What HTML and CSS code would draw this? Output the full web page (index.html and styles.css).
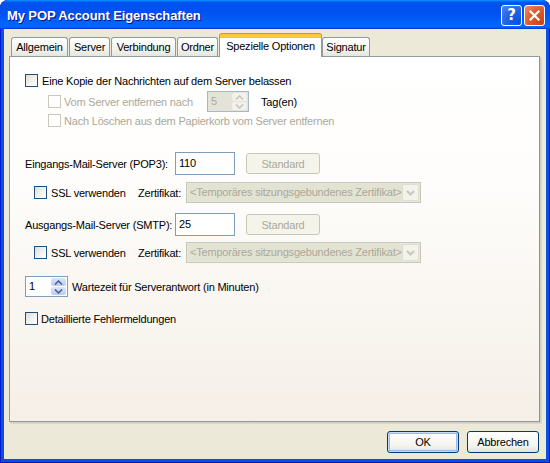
FILE: index.html
```html
<!DOCTYPE html>
<html>
<head>
<meta charset="utf-8">
<link rel="stylesheet" href="styles.css">
</head>
<body>
<div class="window">
  <div class="titlebar">
    <span class="title">My POP Account Eigenschaften</span>
    <div class="tb-buttons">
      <span class="tb-btn help">?</span>
      <span class="tb-btn close"><svg width="21" height="21" viewBox="0 0 21 21"><path d="M6.5 6.5 L14.5 14.5 M14.5 6.5 L6.5 14.5" stroke="#fff" stroke-width="2.2" stroke-linecap="square"/></svg></span>
    </div>
  </div>
  <div class="client">
    <div class="tabs">
      <div class="tab t-allg">Allgemein</div>
      <div class="tab t-serv">Server</div>
      <div class="tab t-verb">Verbindung</div>
      <div class="tab t-ord">Ordner</div>
      <div class="tab t-spez selected">Spezielle Optionen</div>
      <div class="tab t-sig">Signatur</div>
    </div>
    <div class="panel">
      <div class="row r1">
        <span class="cb"></span><span class="lbl">Eine Kopie der Nachrichten auf dem Server belassen</span>
      </div>
      <div class="row r2 indent">
        <span class="cb disabled"></span><span class="lbl dis w-vom">Vom Server entfernen nach</span>
        <div class="spin disabled s-days">
          <span class="spin-val">5</span>
          <span class="spin-btns">
            <span class="sb"><svg width="9" height="5" viewBox="0 0 9 5"><path d="M1 4.5 L4.5 1 L8 4.5" fill="none" stroke="#C9C7BA" stroke-width="1.6"/></svg></span>
            <span class="sb"><svg width="9" height="5" viewBox="0 0 9 5"><path d="M1 0.5 L4.5 4 L8 0.5" fill="none" stroke="#C9C7BA" stroke-width="1.6"/></svg></span>
          </span>
        </div>
        <span class="lbl tagen">Tag(en)</span>
      </div>
      <div class="row r3 indent">
        <span class="cb disabled"></span><span class="lbl dis">Nach Löschen aus dem Papierkorb vom Server entfernen</span>
      </div>
      <div class="row r4">
        <span class="lbl w-srv">Eingangs-Mail-Server (POP3):</span>
        <span class="input">110</span>
        <span class="btn disabled-btn">Standard</span>
      </div>
      <div class="row r5 ssl">
        <span class="cb"></span><span class="lbl w-ssl">SSL verwenden</span>
        <span class="lbl w-zert">Zertifikat:</span>
        <div class="combo">
          <span class="combo-text">&lt;Temporäres sitzungsgebundenes Zertifikat&gt;</span>
          <span class="combo-btn"><svg width="9" height="6" viewBox="0 0 9 6"><path d="M1 1 L4.5 4.5 L8 1" fill="none" stroke="#C9C7BA" stroke-width="2"/></svg></span>
        </div>
      </div>
      <div class="row r6">
        <span class="lbl w-srv">Ausgangs-Mail-Server (SMTP):</span>
        <span class="input">25</span>
        <span class="btn disabled-btn">Standard</span>
      </div>
      <div class="row r7 ssl">
        <span class="cb"></span><span class="lbl w-ssl">SSL verwenden</span>
        <span class="lbl w-zert">Zertifikat:</span>
        <div class="combo">
          <span class="combo-text">&lt;Temporäres sitzungsgebundenes Zertifikat&gt;</span>
          <span class="combo-btn"><svg width="9" height="6" viewBox="0 0 9 6"><path d="M1 1 L4.5 4.5 L8 1" fill="none" stroke="#C9C7BA" stroke-width="2"/></svg></span>
        </div>
      </div>
      <div class="row r8">
        <div class="spin s-min">
          <span class="spin-val">1</span>
          <span class="spin-btns">
            <span class="sb on"><svg width="9" height="5" viewBox="0 0 9 5"><path d="M1 4.5 L4.5 1 L8 4.5" fill="none" stroke="#4D6185" stroke-width="1.6"/></svg></span>
            <span class="sb on"><svg width="9" height="5" viewBox="0 0 9 5"><path d="M1 0.5 L4.5 4 L8 0.5" fill="none" stroke="#4D6185" stroke-width="1.6"/></svg></span>
          </span>
        </div>
        <span class="lbl wart">Wartezeit für Serverantwort (in Minuten)</span>
      </div>
      <div class="row r9">
        <span class="cb"></span><span class="lbl detail">Detaillierte Fehlermeldungen</span>
      </div>
    </div>
    <div class="buttons">
      <span class="btn push default">OK</span>
      <span class="btn push">Abbrechen</span>
    </div>
  </div>
</div>
</body>
</html>
```

FILE: styles.css
```css
html, body {
  margin: 0;
  padding: 0;
  background: #ffffff;
}
body {
  font-family: "Liberation Sans", Arial, sans-serif;
  font-size: 11px;
  letter-spacing: -0.2px;
  color: #000;
}
.window {
  width: 550px;
  height: 463px;
  box-sizing: border-box;
  display: flex;
  flex-direction: column;
  background: #0A4FE4;
  border-radius: 8px 8px 0 0;
  box-shadow: inset 1px 0 #0019CF, inset -1px 0 #001EA0, inset 0 -1px #001EA0;
  overflow: hidden;
}
.titlebar {
  height: 29px;
  flex: none;
  display: flex;
  align-items: center;
  justify-content: space-between;
  padding: 0 5px 0 7px;
  background: linear-gradient(180deg, #0997ff, #0053ee 8%, #0050ee 40%, #06f 88%, #06f 93%, #005bff 95%, #003dd7 96%, #003dd7);
  border-radius: 8px 8px 0 0;
}
.title {
  color: #fff;
  font-family: "Liberation Sans", Arial, sans-serif;
  font-weight: bold;
  font-size: 13px;
  letter-spacing: -0.1px;
  text-shadow: 1px 1px #0F1089;
  margin-top: 2px;
}
.tb-buttons {
  display: flex;
  gap: 2px;
  margin-top: 1px;
}
.tb-btn {
  width: 21px;
  height: 21px;
  box-sizing: border-box;
  border: 1px solid #fff;
  border-radius: 3px;
  display: flex;
  align-items: center;
  justify-content: center;
}
.tb-btn.help {
  background: radial-gradient(circle at 90% 90%, #0054E3 0%, #2663E0 55%, #4D86F5 100%);
  color: #fff;
  font-family: "DejaVu Sans", sans-serif;
  font-weight: bold;
  font-size: 15px;
  line-height: 19px;
  letter-spacing: 0;
}
.tb-btn.close {
  background: radial-gradient(circle at 90% 90%, #CC4416 0%, #E0582E 55%, #F08E6F 100%);
}
.tb-btn.close svg {
  display: block;
  margin: -1px;
}
.client {
  flex: 1;
  margin: 0 4px 4px 4px;
  background: #ECE9D8;
  padding: 5px 7px 0 5px;
  display: flex;
  flex-direction: column;
}
.tabs {
  height: 22px;
  display: flex;
  align-items: flex-end;
  padding-left: 2px;
}
.tab {
  height: 19px;
  box-sizing: border-box;
  border: 1px solid #919B9C;
  border-bottom: none;
  border-radius: 3px 3px 0 0;
  background: linear-gradient(#fff, #F3F3EF 60%, #E6E5DF);
  margin-right: 1px;
  text-align: center;
  line-height: 18px;
  white-space: nowrap;
}
.t-allg { width: 57px; }
.t-serv { width: 41px; }
.t-verb { width: 65px; }
.t-ord { width: 41px; }
.t-spez { width: 103px; }
.t-sig { width: 48px; }
.tab.selected {
  height: 23px;
  margin-bottom: -1px;
  margin-right: 0;
  background: #fff;
  border-top: 3px solid #FFC73C;
  box-shadow: inset 0 1px 0 #FFC73C, 0 -1px 0 #E68B2C;
  position: relative;
  z-index: 1;
  line-height: 18px;
}
.panel {
  width: 531px;
  height: 366px;
  box-sizing: border-box;
  border: 1px solid #919B9C;
  border-right-color: #8D9697;
  box-shadow: 1px 1px 0 #D0CEBF, 2px 2px 0 #DAD8CA;
  background: linear-gradient(#ffffff 0%, #FEFDFB 35%, #F5EFE7 100%);
  padding: 15px 0 0 15px;
}
.row {
  display: flex;
  align-items: center;
  white-space: nowrap;
}
.indent { padding-left: 23px; }
.ssl { padding-left: 9px; }
.r1 { height: 19px; margin-top: -1px; }
.r2 { height: 21px; margin-top: 1px; }
.r3 { height: 17px; }
.r4 { height: 23px; margin-top: 23px; }
.r5 { height: 21px; margin-top: 7px; }
.r6 { height: 23px; margin-top: 10px; }
.r7 { height: 21px; margin-top: 6px; }
.r8 { height: 21px; margin-top: 13px; }
.r9 { height: 17px; margin-top: 13px; }
.cb {
  width: 13px;
  height: 13px;
  box-sizing: border-box;
  border: 1px solid #1C5180;
  background: linear-gradient(135deg, #DCDCD7 0%, #F2F2EF 55%, #fff 100%);
  flex: none;
  margin-right: 4px;
}
.cb.disabled {
  border-color: #CAC8BB;
  background: #fff;
  margin-right: 3px;
}
.r9 .cb { margin-right: 3px; }
.dis { color: #ACA899; }
.w-vom { width: 143px; }
.tagen { margin-left: 12px; }
.w-srv { width: 150px; }
.w-ssl { width: 87px; }
.w-zert { width: 48px; }
.wart { margin-left: 4px; }
.input {
  width: 60px;
  height: 23px;
  box-sizing: border-box;
  border: 1px solid #7F9DB9;
  background: #fff;
  padding: 2px 3px;
  line-height: 16px;
}
.btn {
  box-sizing: border-box;
  display: flex;
  align-items: center;
  justify-content: center;
  border-radius: 3px;
}
.disabled-btn {
  width: 74px;
  height: 21px;
  margin-left: 11px;
  border: 1px solid #C9C7BA;
  background: #F5F4EA;
  color: #ACA899;
}
.spin {
  height: 21px;
  box-sizing: border-box;
  border: 1px solid #7F9DB9;
  display: flex;
  background: #fff;
}
.spin.disabled {
  background: #E4E3D7;
  border-color: #A9B8C7;
}
.s-days { width: 42px; margin-left: 0; }
.s-min { width: 43px; }
.spin-val {
  flex: 1;
  padding: 0 3px;
  line-height: 19px;
}
.spin.disabled .spin-val { color: #ACA899; }
.spin-btns {
  width: 15px;
  display: flex;
  flex-direction: column;
  padding: 1px 1px 1px 0;
  gap: 1px;
}
.sb {
  flex: 1;
  display: flex;
  align-items: center;
  justify-content: center;
  background: #F2F1EA;
  border-radius: 2px;
}
.sb.on {
  background: linear-gradient(#DBE5FB, #B9CCF6);
}
.combo {
  width: 235px;
  height: 21px;
  box-sizing: border-box;
  border: 1px solid #C9C7BA;
  background: #E7E6DA;
  display: flex;
  padding: 1px;
}
.combo-text {
  flex: 1;
  overflow: hidden;
  color: #ACA899;
  line-height: 17px;
  padding-left: 2px;
  background: #E3E3D4;
}
.combo-btn {
  width: 17px;
  display: flex;
  align-items: center;
  justify-content: center;
  background: #F3F2EB;
  border: 1px solid #E0DED3;
  box-sizing: border-box;
  border-radius: 2px;
}
.buttons {
  display: flex;
  justify-content: flex-end;
  gap: 8px;
  margin-top: 9px;
}
.push {
  width: 72px;
  height: 22px;
  border: 1px solid #003C74;
  background: linear-gradient(#FFFFFF, #F4F3EE 70%, #E3E1D6);
}
.push.default {
  box-shadow: inset 0 0 0 1px #C8DAF7, inset 0 0 0 2px #9DB9EB;
}
```
